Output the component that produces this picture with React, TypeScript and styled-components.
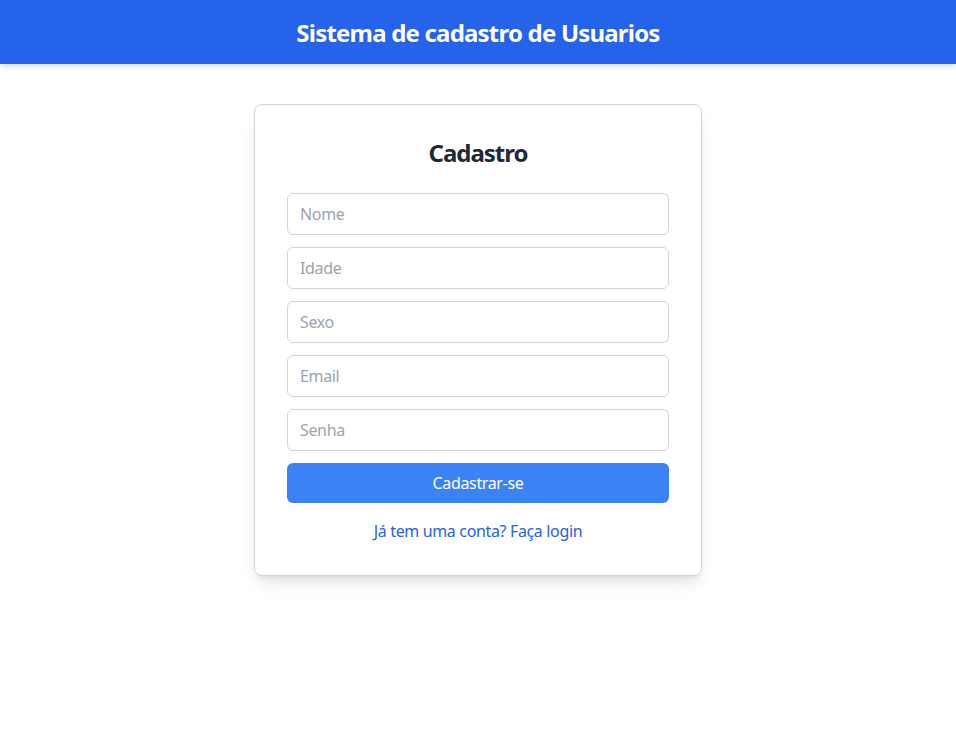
import React from "react";
import styled, { createGlobalStyle } from "styled-components";

const Global = createGlobalStyle`
  * { box-sizing: border-box; }
  html, body { margin: 0; padding: 0; background: #ffffff; }
  body { font-family: "Noto Sans", "Open Sans", sans-serif; letter-spacing: -0.35px; }
`;

const Page = styled.div`
  min-height: 742px;
  background: #ffffff;
`;

const Header = styled.header`
  height: 64px;
  padding-top: 1px;
  background: #2563eb;
  box-shadow: 0 4px 6px -1px rgba(0, 0, 0, 0.1), 0 2px 4px -2px rgba(0, 0, 0, 0.1);
  display: flex;
  align-items: center;
  justify-content: center;
`;

const HeaderTitle = styled.h1`
  margin: 0;
  color: #ffffff;
  font-size: 24px;
  line-height: 32px;
  font-weight: 700;
  letter-spacing: -0.8px;
`;

const Main = styled.main`
  display: flex;
  justify-content: center;
  padding-top: 40px;
`;

const Card = styled.div`
  width: 448px;
  background: #ffffff;
  border: 1px solid #d1d5db;
  border-radius: 8px;
  padding: 32px;
  box-shadow: 0 10px 15px -3px rgba(0, 0, 0, 0.1), 0 4px 6px -4px rgba(0, 0, 0, 0.1);
  display: flex;
  flex-direction: column;
`;

const CardTitle = styled.h2`
  margin: 0 0 24px;
  text-align: center;
  color: #1f2937;
  font-size: 24px;
  line-height: 32px;
  font-weight: 700;
  letter-spacing: -1px;
`;

const Form = styled.form`
  display: flex;
  flex-direction: column;
  gap: 12px;
`;

const Input = styled.input`
  height: 42px;
  width: 100%;
  border: 1px solid #d1d5db;
  border-radius: 6px;
  padding: 8px 12px;
  font-family: inherit;
  letter-spacing: inherit;
  font-size: 16px;
  line-height: 24px;
  color: #111827;
  outline: none;
  &::placeholder { color: #9ca3af; }
`;

const Button = styled.button`
  height: 40px;
  width: 100%;
  border: none;
  border-radius: 6px;
  background: #3b82f6;
  color: #ffffff;
  font-family: inherit;
  letter-spacing: inherit;
  font-size: 16px;
  line-height: 24px;
  cursor: pointer;
`;

const LinkRow = styled.p`
  margin: 16px 0 0;
  text-align: center;
  font-size: 16px;
  line-height: 24px;
  color: #2563eb;
`;

const fields = ["Nome", "Idade", "Sexo", "Email", "Senha"];

export default function App() {
  return (
    <Page>
      <Global />
      <Header>
        <HeaderTitle>Sistema de cadastro de Usuarios</HeaderTitle>
      </Header>
      <Main>
        <Card>
          <CardTitle>Cadastro</CardTitle>
          <Form onSubmit={(e) => e.preventDefault()}>
            {fields.map((f) => (
              <Input key={f} placeholder={f} type={f === "Senha" ? "password" : "text"} />
            ))}
            <Button type="submit">Cadastrar-se</Button>
          </Form>
          <LinkRow>Já tem uma conta? Faça login</LinkRow>
        </Card>
      </Main>
    </Page>
  );
}
